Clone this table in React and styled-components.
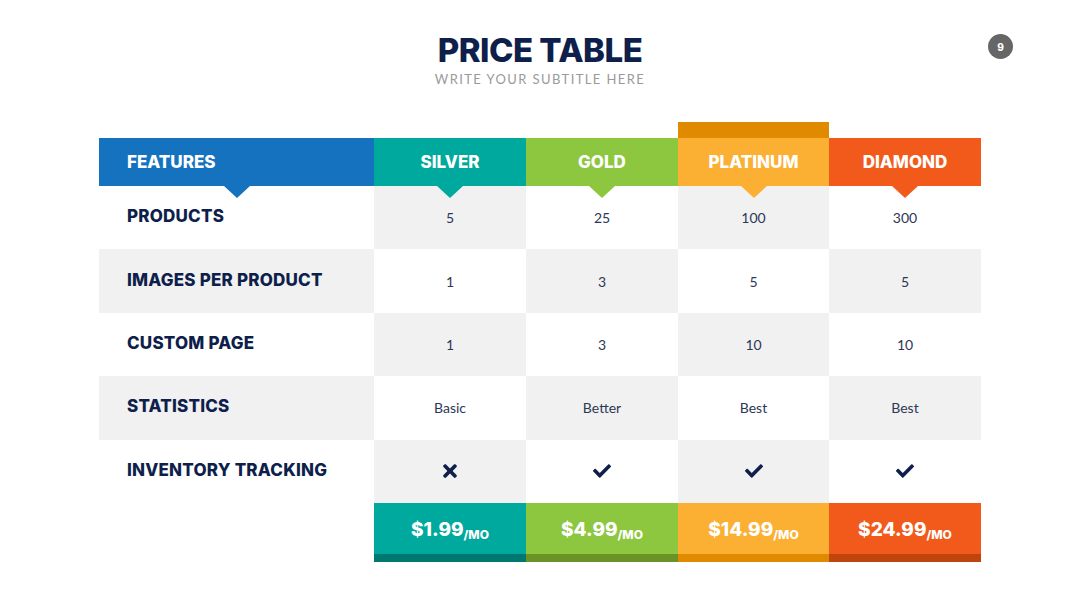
import styled, { createGlobalStyle } from "styled-components";
import { FaCheck, FaTimes } from "react-icons/fa";

const GlobalStyle = createGlobalStyle`
  html, body {
    margin: 0;
    padding: 0;
    background: #ffffff;
  }
  body {
    width: 1080px;
    height: 608px;
    overflow: hidden;
    font-family: "Inter", "Liberation Sans", sans-serif;
  }
`;

const NAVY = "#0f1f4b";

const plans = [
  { name: "SILVER", color: "#00a99d", dark: "#00786f", price: "$1.99" },
  { name: "GOLD", color: "#8dc63f", dark: "#6a9227", price: "$4.99" },
  { name: "PLATINUM", color: "#fbb034", dark: "#e08a00", price: "$14.99", top: true },
  { name: "DIAMOND", color: "#f15a1b", dark: "#c1440e", price: "$24.99" },
];

const rows = [
  { label: "PRODUCTS", values: ["5", "25", "100", "300"] },
  { label: "IMAGES PER PRODUCT", values: ["1", "3", "5", "5"] },
  { label: "CUSTOM PAGE", values: ["1", "3", "10", "10"] },
  { label: "STATISTICS", values: ["Basic", "Better", "Best", "Best"] },
  { label: "INVENTORY TRACKING", values: ["x", "v", "v", "v"] },
];

function App() {
  return (
    <Slide>
      <GlobalStyle />
      <PageBadge>9</PageBadge>
      <Heading>
        <Title>PRICE TABLE</Title>
        <Subtitle>WRITE YOUR SUBTITLE HERE</Subtitle>
      </Heading>

      <Table>
        <Blank />
        {plans.map((p) => (
          <TopBar key={p.name} color={p.top ? p.dark : "transparent"} />
        ))}

        <HeadCell color="#1572be" left>
          FEATURES
          <Pointer color="#1572be" />
        </HeadCell>
        {plans.map((p) => (
          <HeadCell key={p.name} color={p.color}>
            {p.name}
            <Pointer color={p.color} />
          </HeadCell>
        ))}

        {rows.map((r, ri) => (
          <Row key={r.label}>
            <LabelCell shaded={ri % 2 === 1}>{r.label}</LabelCell>
            {r.values.map((v, ci) => (
              <ValueCell key={ci} shaded={(ri + ci) % 2 === 0}>
                {v === "x" ? (
                  <FaTimes size={20} />
                ) : v === "v" ? (
                  <FaCheck size={18} />
                ) : (
                  v
                )}
              </ValueCell>
            ))}
          </Row>
        ))}

        <Blank />
        {plans.map((p) => (
          <PriceCell key={p.name} color={p.color} dark={p.dark}>
            {p.price}
            <Per>/MO</Per>
          </PriceCell>
        ))}
      </Table>
    </Slide>
  );
}

export default App;

const Slide = styled.div`
  position: relative;
  width: 1080px;
  height: 608px;
  box-sizing: border-box;
  padding-top: 30px;
`;

const PageBadge = styled.div`
  position: absolute;
  top: 34px;
  left: 988px;
  width: 25px;
  height: 25px;
  border-radius: 50%;
  background: #666666;
  color: #ffffff;
  font-size: 10px;
  font-weight: 800;
  display: grid;
  place-items: center;
`;

const Heading = styled.div`
  display: flex;
  flex-direction: column;
  align-items: center;
`;

const Title = styled.h1`
  margin: 0;
  font-size: 33px;
  line-height: 40px;
  font-weight: 800;
  color: ${NAVY};
  letter-spacing: -0.5px;
`;

const Subtitle = styled.div`
  margin-top: 1px;
  font-family: "Lato", "Liberation Sans", sans-serif;
  font-size: 13px;
  letter-spacing: 1.4px;
  color: #9a9a9a;
`;

const Table = styled.div`
  display: grid;
  grid-template-columns: 275px 152px 152px 151px 152px;
  grid-template-rows: 16px 48px repeat(5, 63.4px) 59px;
  width: 882px;
  margin: 35px auto 0;
`;

const Blank = styled.div``;

const TopBar = styled.div`
  background: ${(p) => p.color};
`;

const HeadCell = styled.div`
  position: relative;
  background: ${(p) => p.color};
  color: #ffffff;
  font-size: 17px;
  font-weight: 800;
  display: flex;
  align-items: center;
  justify-content: ${(p) => (p.left ? "flex-start" : "center")};
  padding-left: ${(p) => (p.left ? "28px" : "0")};
  z-index: 1;
`;

const Pointer = styled.span`
  position: absolute;
  top: 100%;
  left: 50%;
  margin-left: -13px;
  width: 0;
  height: 0;
  border-left: 13px solid transparent;
  border-right: 13px solid transparent;
  border-top: 12px solid ${(p) => p.color};
`;

const Row = styled.div`
  display: contents;
`;

const LabelCell = styled.div`
  background: ${(p) => (p.shaded ? "#f1f1f2" : "#ffffff")};
  color: ${NAVY};
  font-size: 17px;
  font-weight: 800;
  letter-spacing: 0.2px;
  display: flex;
  align-items: center;
  padding-left: 28px;
  padding-bottom: 3px;
`;

const ValueCell = styled.div`
  background: ${(p) => (p.shaded ? "#f1f1f2" : "#ffffff")};
  color: #2e3755;
  font-family: "Lato", "Liberation Sans", sans-serif;
  font-size: 14px;
  display: flex;
  align-items: center;
  justify-content: center;
  svg {
    color: ${NAVY};
  }
`;

const PriceCell = styled.div`
  background: ${(p) => p.color};
  border-bottom: 8px solid ${(p) => p.dark};
  color: #ffffff;
  font-size: 19px;
  font-weight: 800;
  display: flex;
  align-items: center;
  justify-content: center;
  padding-top: 2px;
`;

const Per = styled.span`
  font-size: 12px;
  font-weight: 800;
  position: relative;
  top: 5px;
`;
